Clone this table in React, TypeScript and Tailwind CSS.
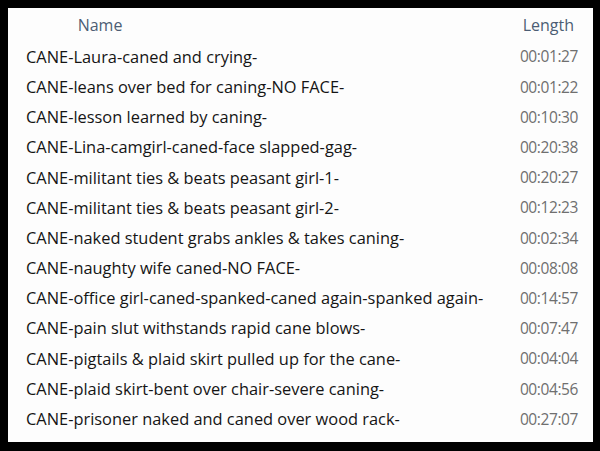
const ROWS: [string, string][] = [
  ['CANE-Laura-caned and crying-', '00:01:27'],
  ['CANE-leans over bed for caning-NO FACE-', '00:01:22'],
  ['CANE-lesson learned by caning-', '00:10:30'],
  ['CANE-Lina-camgirl-caned-face slapped-gag-', '00:20:38'],
  ['CANE-militant ties & beats peasant girl-1-', '00:20:27'],
  ['CANE-militant ties & beats peasant girl-2-', '00:12:23'],
  ['CANE-naked student grabs ankles & takes caning-', '00:02:34'],
  ['CANE-naughty wife caned-NO FACE-', '00:08:08'],
  ['CANE-office girl-caned-spanked-caned again-spanked again-', '00:14:57'],
  ['CANE-pain slut withstands rapid cane blows-', '00:07:47'],
  ['CANE-pigtails & plaid skirt pulled up for the cane-', '00:04:04'],
  ['CANE-plaid skirt-bent over chair-severe caning-', '00:04:56'],
  ['CANE-prisoner naked and caned over wood rack-', '00:27:07'],
]

export default function App() {
  return (
    <div className="w-[600px] h-[451px] bg-black pt-[8px] pl-[8px] pr-[7px] pb-[9px]">
      <div
        className="h-full bg-[#fdfdfd] overflow-hidden"
        style={{ fontFamily: '"Open Sans", "Noto Sans", sans-serif' }}
      >
        <div className="flex items-center h-[34px] text-[16px] text-[#4c5d74]">
          <div className="w-[184px] text-center">Name</div>
          <div className="flex-1" />
          <div className="pr-[19px]">Length</div>
        </div>
        {ROWS.map(([name, len]) => (
          <div key={name} className="flex items-center h-[30.2px]">
            <div className="flex-1 pl-[18px] text-[16.4px] text-[#151515] whitespace-nowrap">{name}</div>
            <div className="pr-[15px] text-[15.5px] tracking-[-0.4px] text-[#6f6f6f]">{len}</div>
          </div>
        ))}
      </div>
    </div>
  )
}
